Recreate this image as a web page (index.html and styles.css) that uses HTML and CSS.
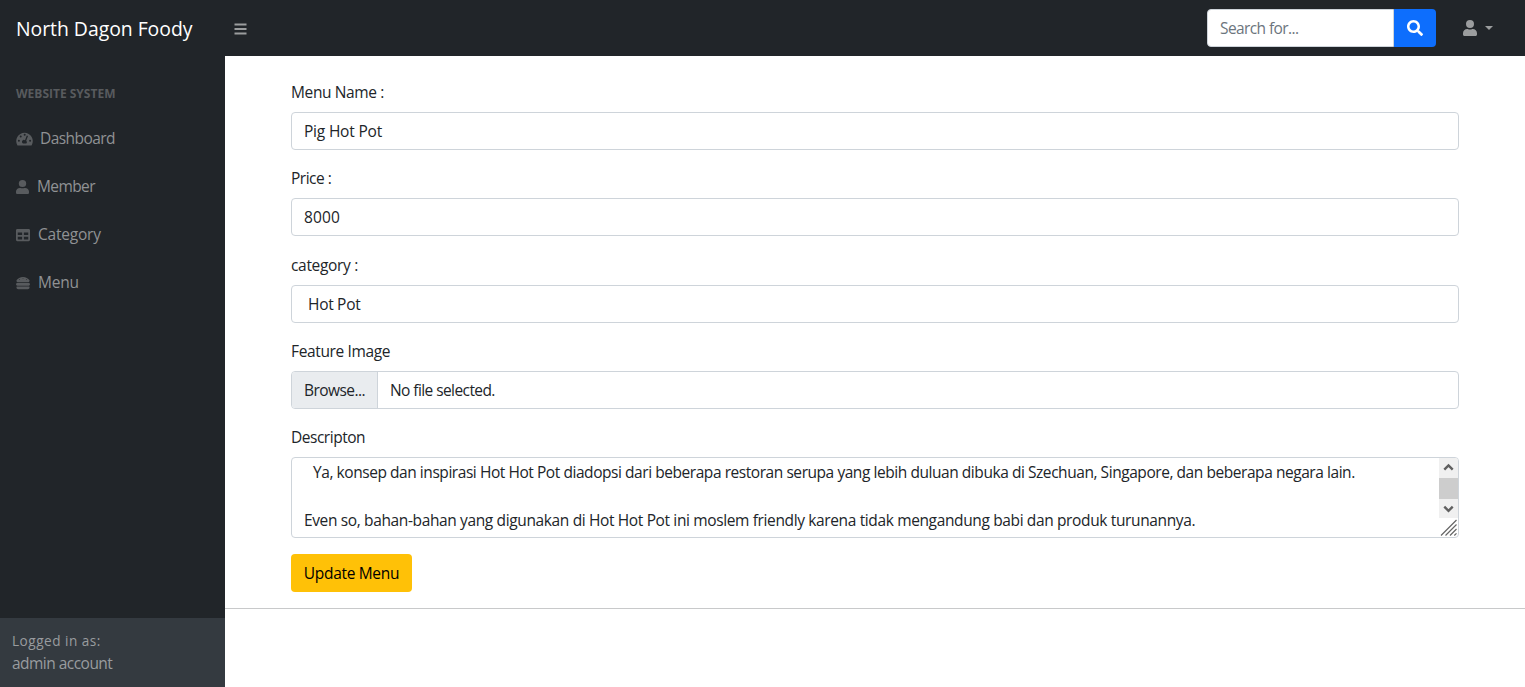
FILE: index.html
```html
<!DOCTYPE html>
<html lang="en">
<head>
<meta charset="utf-8">
<title>North Dagon Foody</title>
<link rel="stylesheet" href="styles.css">
</head>
<body>
<header class="topbar">
  <a class="brand">North Dagon Foody</a>
  <button class="toggle" aria-label="Toggle navigation"><svg width="13" height="14" viewBox="0 0 13 14"><path d="M.5 2.5h12M.5 7h12M.5 11.5h12" stroke="currentColor" stroke-width="1.8"/></svg></button>
  <div class="search">
    <div class="search-input"><span class="t-search">Search for...</span></div>
    <button class="search-btn" aria-label="Search"><svg width="16" height="16" viewBox="0 0 512 512"><path fill="currentColor" d="M505 442.700L405.300 343c-4.500-4.500-10.600-7-17-7H372c27.600-35.300 44-79.700 44-128C416 93.100 322.900 0 208 0S0 93.100 0 208s93.100 208 208 208c48.300 0 92.700-16.400 128-44v16.300c0 6.400 2.500 12.500 7 17l99.700 99.700c9.400 9.400 24.600 9.400 33.900 0l28.300-28.300c9.400-9.400 9.400-24.600.1-34zM208 336c-70.700 0-128-57.200-128-128 0-70.700 57.200-128 128-128 70.700 0 128 57.200 128 128 0 70.700-57.200 128-128 128z"/></svg></button>
  </div>
  <div class="user"><svg width="14" height="16" viewBox="0 0 448 512"><path fill="currentColor" d="M224 256a128 128 0 1 0 0-256 128 128 0 0 0 0 256zm89.600 32h-16.700a174 174 0 0 1-145.800 0h-16.700C60.200 288 0 348.200 0 422.400V464c0 26.500 21.500 48 48 48h352c26.500 0 48-21.500 48-48v-41.600c0-74.200-60.200-134.400-134.400-134.400z"/></svg><span class="caret"></span></div>
</header>
<div class="layout">
  <aside class="sidebar">
    <nav class="nav">
      <div class="heading">WEBSITE SYSTEM</div>
      <a class="link"><svg class="i-dash" width="17" height="14" viewBox="0 0 17 14"><path fill="currentColor" fill-rule="evenodd" d="M1.300 13.200A8.300 8.300 0 1 1 15.700 13.200Q15.400 13.600 14.900 13.600H2.100Q1.600 13.600 1.300 13.200ZM7.700 2.700a1 1 0 1 0 2 0a1 1 0 1 0-2 0ZM3.700 4.400a1 1 0 1 0 2 0a1 1 0 1 0-2 0ZM1.900 8.800a1 1 0 1 0 2 0a1 1 0 1 0-2 0ZM13.100 8.800a1 1 0 1 0 2 0a1 1 0 1 0-2 0ZM10.800 3.500 9 8.200a1.900 1.900 0 0 0-2 3.300h3.200a1.900 1.900 0 0 0 0-2.700L12 4Z"/></svg><span class="t-dashboard">Dashboard</span></a>
      <a class="link"><svg class="i-user" width="13" height="14" viewBox="0 0 448 512" preserveAspectRatio="none"><path fill="currentColor" d="M224 256a128 128 0 1 0 0-256 128 128 0 0 0 0 256zm89.600 32h-16.700a174 174 0 0 1-145.800 0h-16.700C60.200 288 0 348.200 0 422.400V464c0 26.500 21.500 48 48 48h352c26.500 0 48-21.500 48-48v-41.600c0-74.200-60.200-134.400-134.400-134.400z"/></svg><span class="t-member">Member</span></a>
      <a class="link"><svg class="i-table" width="14" height="14" viewBox="0 0 512 512"><path fill="currentColor" d="M464 32H48C21.500 32 0 53.500 0 80v352c0 26.500 21.500 48 48 48h416c26.500 0 48-21.500 48-48V80c0-26.500-21.500-48-48-48zM224 416H64v-96h160v96zm0-160H64v-96h160v96zm224 160H288v-96h160v96zm0-160H288v-96h160v96z"/></svg><span class="t-category">Category</span></a>
      <a class="link"><svg class="i-burger" width="14" height="14" viewBox="0 0 512 512"><path fill="currentColor" fill-rule="evenodd" d="M464 256H48a48 48 0 0 0 0 96h416a48 48 0 0 0 0-96zm16 128H32a16 16 0 0 0-16 16v16a64 64 0 0 0 64 64h352a64 64 0 0 0 64-64v-16a16 16 0 0 0-16-16zM58.600 224h394.700c34.600 0 54.600-43.900 34.800-75.900C448 83.200 359.600 32.100 256 32c-103.500.1-192 51.200-232.200 116.100C4 180.100 24.100 224 58.600 224zM384 112a16 16 0 1 1 0 32 16 16 0 0 1 0-32zM256 80a16 16 0 1 1 0 32 16 16 0 0 1 0-32zm-128 32a16 16 0 1 1 0 32 16 16 0 0 1 0-32z"/></svg><span class="t-menu">Menu</span></a>
    </nav>
    <footer class="account"><div class="small">Logged in as:</div><div class="t-admin">admin account</div></footer>
  </aside>
  <main class="content">
    <form class="form">
      <div class="group"><label class="label"><span class="t-name">Menu Name :</span></label><div class="control"><span class="t-pig">Pig Hot Pot</span></div></div>
      <div class="group"><label class="label"><span class="t-price">Price :</span></label><div class="control"><span class="t-8000">8000</span></div></div>
      <div class="group"><label class="label"><span class="t-cat">category :</span></label><div class="control select"><span class="t-hot">Hot Pot</span></div></div>
      <div class="group"><label class="label"><span class="t-feature">Feature Image</span></label><div class="control file"><span class="browse"><span class="t-browse">Browse...</span></span><span class="t-nofile">No file selected.</span></div></div>
      <div class="group"><label class="label"><span class="t-desc">Descripton</span></label>
        <div class="textarea">
          <div class="copy"><p class="indent"><span class="t-ya">Ya, konsep dan inspirasi Hot Hot Pot diadopsi dari beberapa restoran serupa yang lebih duluan dibuka di Szechuan, Singapore, dan beberapa negara lain.</span></p><p class="second"><span class="t-even">Even so, bahan-bahan yang digunakan di Hot Hot Pot ini moslem friendly karena tidak mengandung babi dan produk turunannya.</span></p></div>
          <div class="rail">
            <svg class="arrow" width="19" height="20" viewBox="0 0 19 20"><path d="M5.300 11.600 9.500 7.400l4.200 4.200" fill="none" stroke="#606060" stroke-width="2.400"/></svg>
            <div class="thumb"></div>
            <svg class="arrow" width="19" height="19" viewBox="0 0 19 19"><path d="m5.300 7.700 4.200 4.200 4.200-4.200" fill="none" stroke="#606060" stroke-width="2.400"/></svg>
            <svg class="grip" width="19" height="19" viewBox="0 0 19 19"><path d="M2 17.500 17.500 2M6.500 17.500l11-11M11 17.500l6.500-6.500M15.300 17.500l2.200-2.200" stroke="#666" stroke-width="1.200"/></svg>
          </div>
        </div>
      </div>
      <button class="submit" type="button"><span class="t-update">Update Menu</span></button>
    </form>
    <hr class="rule">
  </main>
</div>
</body>
</html>
```
FILE: styles.css
```css
* { box-sizing: border-box; }
body { margin: 0; height: 687px; overflow: hidden; display: flex; flex-direction: column; background: #fff; color: #212529; font: 15.5px/24px "Open Sans", "Noto Sans", sans-serif; }
button { border: 0; padding: 0; font: inherit; }
svg { display: block; flex: none; }
span { white-space: nowrap; }
p { margin: 0; }
.topbar { height: 56px; flex: none; background: #212529; display: flex; align-items: center; }
.brand { width: 225px; padding: 2px 0 0 16px; color: #fff; font-size: 19.4px; line-height: 30px; white-space: nowrap; letter-spacing: -.03px; }
.toggle { margin-left: 9px; background: none; color: #9b9d9e; padding-top: 2px; }
.search { margin-left: auto; width: 229px; height: 38px; display: flex; }
.search-input { flex: 1; background: #fff; border: 1px solid #ced4da; border-radius: 4px 0 0 4px; padding: 6px 12px; color: #6c757d; }
.search-btn { width: 42px; background: #0d6efd; color: #fff; border-radius: 0 4px 4px 0; display: flex; align-items: center; justify-content: center; }
.user { width: 62px; margin: 0 0 0 27px; display: flex; align-items: center; gap: 8px; color: #9b9d9e; }
.caret { border: 4.500px solid transparent; border-top-color: currentColor; border-bottom: 0; }
.layout { flex: 1; display: flex; }
.sidebar { width: 225px; background: #212529; color: #909294; display: flex; flex-direction: column; }
.nav { flex: 1; padding-top: 28px; }
.heading { padding-left: 16px; height: 19px; line-height: 19px; margin-bottom: 11px; font-size: 12px; font-weight: 700; color: #585b5e; letter-spacing: 0; }
.link { height: 48px; padding-left: 16px; display: flex; align-items: center; }
.link svg { color: #585b5e; margin-top: 2px; }
.i-dash { margin-right: 7px; }
.i-user { margin-right: 8px; }
.i-table, .i-burger { margin-right: 8px; }
.account { height: 69px; background: #343a40; padding: 12px; color: #999c9f; }
.small { font-size: 13.6px; line-height: 21px; letter-spacing: .5px; }
.content { flex: 1; padding-top: 24px; }
.form { margin: 0 66px; }
.group { margin-bottom: 16.3px; }
.group:last-of-type { margin-bottom: 16px; }
.label { display: block; height: 24px; margin-bottom: 8px; }
.control { height: 38px; border: 1px solid #ced4da; border-radius: 4px; padding: 6px 12px; }
.select { padding-left: 16px; }
.file { padding: 0; display: flex; align-items: center; gap: 12px; overflow: hidden; }
.browse { height: 100%; width: 86px; padding: 6px 12px; background: #e9ecef; border-right: 1px solid #ced4da; }
.textarea { height: 81px; border: 1px solid #ced4da; border-radius: 4px; display: flex; overflow: hidden; }
.copy { flex: 1; min-width: 0; padding: 2px 0 0 12px; }
.indent { padding-left: 9px; }
.second { margin-top: 24px; }
.rail { width: 19px; }
.arrow { background: #f0f0f0; }
.thumb { height: 21px; background: #cdcdcd; }
.submit { display: block; width: 121px; height: 38px; background: #ffc107; color: #000; border-radius: 4px; }
.rule { margin: 16px 0 0; border: 0; border-top: 1px solid #c8c9ca; }

/* Text fitting */
.t-name { letter-spacing: -.38px; }
.t-pig { letter-spacing: -.2px; }
.t-price { letter-spacing: -.5px; }
.t-8000 { letter-spacing: .15px; }
.t-cat { letter-spacing: -.33px; }
.t-hot { letter-spacing: -.3px; }
.t-feature { letter-spacing: -.36px; }
.t-browse { letter-spacing: -.55px; }
.t-nofile { letter-spacing: -.58px; }
.t-desc { letter-spacing: -.48px; }
.t-ya { letter-spacing: -.443px; }
.t-even { letter-spacing: -.367px; }
.t-update { letter-spacing: -.32px; }
.t-dashboard { letter-spacing: -.55px; }
.t-member { letter-spacing: -.6px; }
.t-category { letter-spacing: -.22px; }
.t-menu { letter-spacing: -.2px; }
.t-admin { letter-spacing: -.53px; }
.t-search { letter-spacing: -.6px; }
```
